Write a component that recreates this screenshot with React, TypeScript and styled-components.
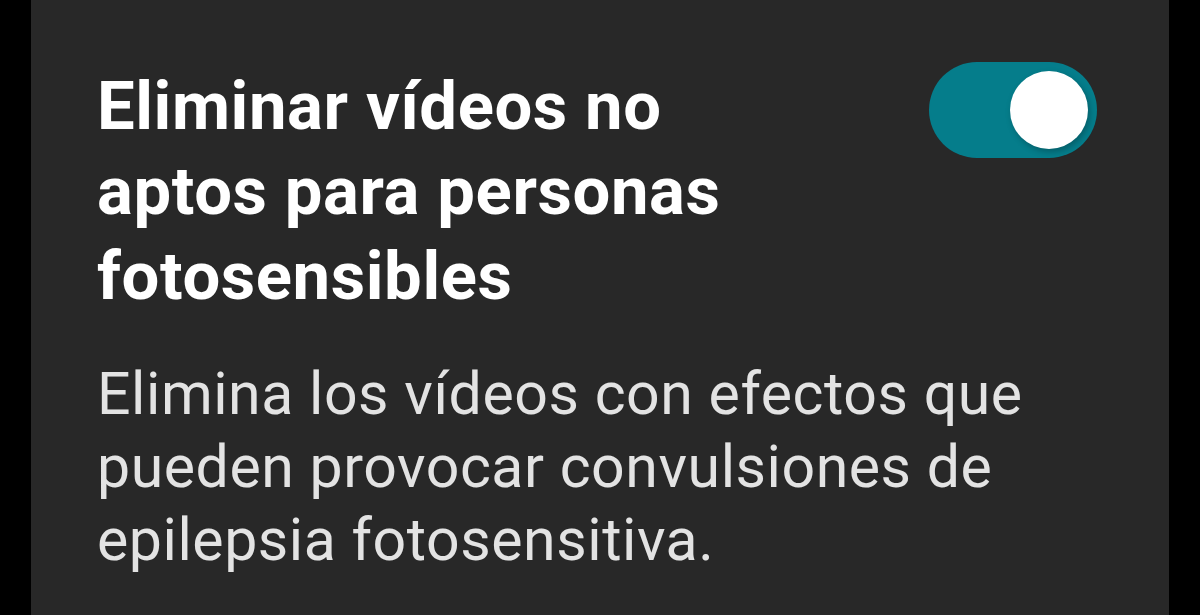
import React from "react";
import styled, { createGlobalStyle } from "styled-components";

const Global = createGlobalStyle`
  html, body { margin: 0; padding: 0; background: #000; }
  body { width: 1200px; height: 615px; overflow: hidden; }
`;

const Page = styled.div`
  width: 1200px;
  height: 615px;
  display: flex;
  justify-content: center;
  background: #000;
`;

const Panel = styled.section`
  width: 1138px;
  height: 615px;
  box-sizing: border-box;
  background: #282828;
  padding: 64px 72px 0 66px;
  display: flex;
  flex-direction: column;
  gap: 38px;
  font-family: Roboto, "Liberation Sans", sans-serif;
`;

const Header = styled.div`
  display: flex;
  justify-content: space-between;
  align-items: flex-start;
`;

const Title = styled.h2`
  margin: 0;
  width: 720px;
  color: #ffffff;
  font-size: 67px;
  line-height: 85px;
  font-weight: 700;
  letter-spacing: 0.6px;
`;

const Track = styled.button<{ $on: boolean }>`
  margin-top: -2px;
  width: 168px;
  height: 96px;
  border: none;
  border-radius: 48px;
  padding: 0 9px;
  background: ${(p) => (p.$on ? "#057d8b" : "#555")};
  display: flex;
  align-items: center;
  justify-content: ${(p) => (p.$on ? "flex-end" : "flex-start")};
  cursor: pointer;
  flex-shrink: 0;
`;

const Knob = styled.span`
  width: 78px;
  height: 78px;
  border-radius: 50%;
  background: #ffffff;
  box-shadow: 2px 3px 6px rgba(0, 0, 0, 0.25);
`;

const Description = styled.p`
  margin: 0;
  color: #e3e3e3;
  font-size: 59px;
  line-height: 73px;
  font-weight: 400;
  letter-spacing: 0.55px;
  width: 980px;
`;

export default function App() {
  const [on, setOn] = React.useState(true);
  return (
    <Page>
      <Global />
      <Panel>
        <Header>
          <Title>
            Eliminar vídeos no
            <br />
            aptos para personas
            <br />
            fotosensibles
          </Title>
          <Track $on={on} onClick={() => setOn(!on)} aria-pressed={on}>
            <Knob />
          </Track>
        </Header>
        <Description>
          Elimina los vídeos con efectos que
          <br />
          pueden provocar convulsiones de
          <br />
          epilepsia fotosensitiva.
        </Description>
      </Panel>
    </Page>
  );
}
